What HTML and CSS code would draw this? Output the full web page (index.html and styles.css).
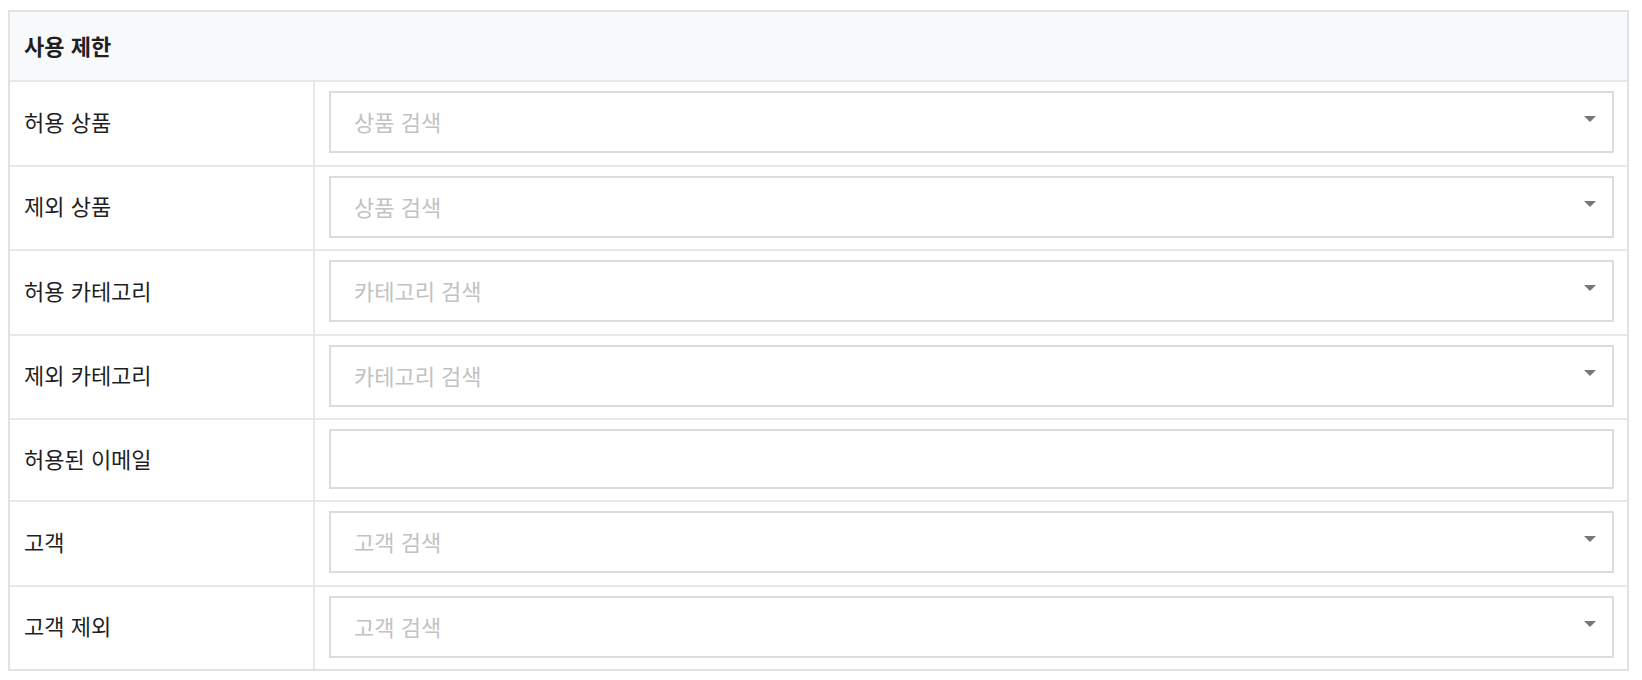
FILE: index.html
```html
<!DOCTYPE html>
<html lang="ko">
<head>
  <meta charset="UTF-8" />
  <title>사용 제한</title>
  <link rel="stylesheet" href="styles.css">
</head>
<body>

<div class="panel">
  <div class="panel-head">사용 제한</div>

  <div class="row">
    <div class="label">허용 상품</div>
    <div class="field">
      <div class="select">
        <span class="placeholder">상품 검색</span>
        <span class="caret"></span>
      </div>
    </div>
  </div>

  <div class="row">
    <div class="label">제외 상품</div>
    <div class="field">
      <div class="select">
        <span class="placeholder">상품 검색</span>
        <span class="caret"></span>
      </div>
    </div>
  </div>

  <div class="row">
    <div class="label">허용 카테고리</div>
    <div class="field">
      <div class="select">
        <span class="placeholder">카테고리 검색</span>
        <span class="caret"></span>
      </div>
    </div>
  </div>

  <div class="row">
    <div class="label">제외 카테고리</div>
    <div class="field">
      <div class="select">
        <span class="placeholder">카테고리 검색</span>
        <span class="caret"></span>
      </div>
    </div>
  </div>

  <div class="row">
    <div class="label">허용된 이메일</div>
    <div class="field">
      <input type="text" class="text-input">
    </div>
  </div>

  <div class="row">
    <div class="label">고객</div>
    <div class="field">
      <div class="select">
        <span class="placeholder">고객 검색</span>
        <span class="caret"></span>
      </div>
    </div>
  </div>

  <div class="row">
    <div class="label">고객 제외</div>
    <div class="field">
      <div class="select">
        <span class="placeholder">고객 검색</span>
        <span class="caret"></span>
      </div>
    </div>
  </div>
</div>

</body>
</html>
```

FILE: styles.css
```css
body {
  font-family: "Noto Sans CJK KR", "Noto Sans", sans-serif;
  background: #fff;
  color: #1f1f1f;
  margin: 10px 13px 0 8px;
}

.panel {
  border: 2px solid #e2e2e2;
  background: #fff;
}

.panel-head {
  box-sizing: border-box;
  height: 68px;
  display: flex;
  align-items: center;
  padding: 0 0 3px 14px;
  background: #f8f9fb;
  font-size: 22px;
  font-weight: bold;
}

.row {
  display: grid;
  grid-template-columns: 305px 1fr;
  border-top: 2px solid #e8e8e8;
}

.label {
  display: flex;
  align-items: center;
  padding: 0 0 5px 14px;
  border-right: 2px solid #e8e8e8;
  font-size: 22px;
}

.field {
  padding: 9px 13px 11.5px 14px;
}

.select {
  box-sizing: border-box;
  height: 62px;
  border: 2px solid #dcdcdc;
  display: flex;
  align-items: center;
  justify-content: space-between;
  padding: 0 16px 0 23px;
}

.placeholder {
  font-size: 22px;
  color: #c2c2c2;
  margin-bottom: 2px;
}

.caret {
  width: 0;
  height: 0;
  border-left: 6px solid transparent;
  border-right: 6px solid transparent;
  border-top: 6px solid #777;
  margin-top: -6px;
}

.text-input {
  display: block;
  box-sizing: border-box;
  width: 100%;
  height: 59.5px;
  border: 2px solid #dcdcdc;
  outline: none;
  margin: 0;
  padding: 0 23px;
  font-size: 22px;
  font-family: inherit;
}
```
